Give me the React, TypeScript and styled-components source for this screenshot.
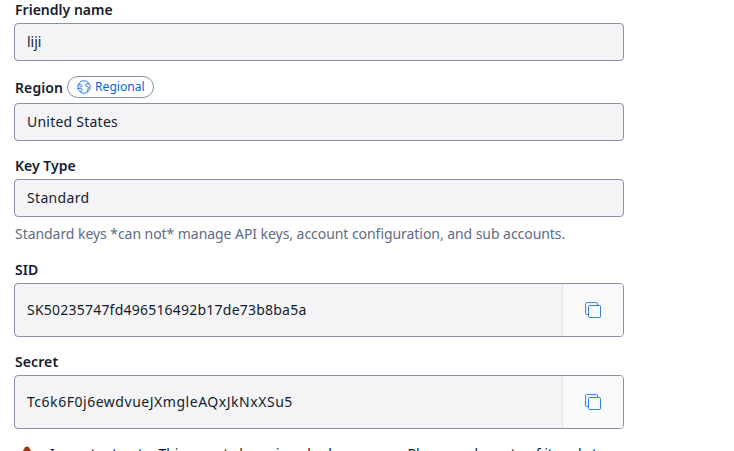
import React from 'react';
import styled, { createGlobalStyle } from 'styled-components';

const Global = createGlobalStyle`
  * { box-sizing: border-box; }
  html, body { margin: 0; background: #fff; overflow: hidden; }
  body { height: 451px; font-family: "Noto Sans", "Open Sans", sans-serif; color: #121c2d; font-size: 14px; }
`;

const Form = styled.main`
  width: 610px;
  height: 451px;
  margin-left: 14px;
  overflow: hidden;
`;

const Field = styled.section<{ $top: number }>`
  padding-top: ${p => p.$top}px;
`;

const LabelRow = styled.div<{ $height?: number }>`
  display: flex;
  align-items: flex-start;
  gap: 5px;
  height: ${p => p.$height ?? 23}px;
  padding-left: 1px;
`;

const Label = styled.label<{ $track?: number }>`
  font-weight: 600;
  line-height: 20px;
  letter-spacing: ${p => p.$track ?? 0}px;
  white-space: nowrap;
`;

const RegionLabel = styled(Label)`
  padding-top: 2px;
`;

const Badge = styled.span`
  display: flex;
  align-items: center;
  gap: 4px;
  width: 87px;
  height: 22px;
  margin-left: -1px;
  padding-left: 9px;
  border: 1px solid #8891aa;
  border-radius: 11px;
  color: #0263e0;
  font-size: 12px;
  line-height: 18px;
  letter-spacing: 0.04px;
  white-space: nowrap;
`;

const Box = styled.div<{ $height: number }>`
  display: flex;
  height: ${p => p.$height}px;
  overflow: hidden;
  border: 1px solid #8891aa;
  border-radius: 4px;
  background: #f4f4f6;
`;

const Value = styled.div<{ $track?: number }>`
  flex: 1;
  display: flex;
  align-items: center;
  padding: 0 0 2px 12px;
  letter-spacing: ${p => p.$track ?? 0}px;
  white-space: nowrap;
`;

const CopyButton = styled.button`
  display: flex;
  align-items: center;
  justify-content: center;
  width: 61px;
  padding: 0;
  border: 0;
  border-left: 1px solid #e1e3ea;
  background: #f9f9fa;
`;

const Help = styled.p`
  margin: 7px 0 0 1px;
  color: #606b85;
  line-height: 20px;
  letter-spacing: -0.055px;
  white-space: nowrap;
`;

const Notice = styled.div`
  display: flex;
  gap: 16px;
  margin: 15px 0 0 6px;
  line-height: 20px;
  white-space: nowrap;
`;

const KeyTerm = styled.span`
  padding: 0 11px 0 7px;
`;

const CopyIcon = () => (
  <svg width="16" height="16" viewBox="0 0 16 16" fill="none" stroke="#0263e0" strokeWidth="0.8">
    <path d="M3.5 12.5H1.6A1 1 0 0 1 .6 11.5V1.6A1 1 0 0 1 1.6.6h9.9a1 1 0 0 1 1 1v1.9" />
    <rect x="3.5" y="3.5" width="12" height="12" rx="1" />
  </svg>
);

const GlobeIcon = () => (
  <svg width="14" height="14" viewBox="0 0 14 14" fill="none" stroke="#0263e0" strokeWidth="0.85" strokeLinejoin="round">
    <circle cx="7" cy="7" r="6.2" />
    <path d="M1.1 4.7h2.7q1.3.2 1.1 1.2-.2.7-1.1.9-.8.3-1.3.1M.9 8.4h2.6q1.5.1 1.6 1.4 0 1-1.2 1.4l-.9.4M12.2 3.7H9.9q-1.3.3-1.3 1.4 0 1 1.2 1.3l1 .2q.9.3.6 1.4l-.6 1.3q-.4.9-.4 2.6" />
  </svg>
);

const WarningIcon = () => (
  <svg width="14" height="14" viewBox="0 0 14 14">
    <path d="M4.4 4.6Q4.6 2.6 7 2.6T9.6 4.6L13.6 11q.6 2-1.2 2H1.6Q-.2 13 .4 11Z" fill="#a82e16" />
  </svg>
);

export default function App() {
  return (
    <>
      <Global />
      <Form>
        <Field $top={0}>
          <LabelRow><Label $track={0.02}>Friendly name</Label></LabelRow>
          <Box $height={38}><Value>liji</Value></Box>
        </Field>
        <Field $top={15}>
          <LabelRow $height={27}><RegionLabel $track={0.1}>Region</RegionLabel><Badge><GlobeIcon />Regional</Badge></LabelRow>
          <Box $height={38}><Value $track={0.23}>United States</Value></Box>
        </Field>
        <Field $top={15}>
          <LabelRow><Label>Key Type</Label></LabelRow>
          <Box $height={38}><Value $track={0.33}>Standard</Value></Box>
          <Help>Standard keys *can not* manage API keys, account configuration, and sub accounts.</Help>
        </Field>
        <Field $top={16}>
          <LabelRow><Label>SID</Label></LabelRow>
          <Box $height={54}><Value $track={0.22}>SK50235747fd496516492b17de73b8ba5a</Value><CopyButton aria-label="Copy SID"><CopyIcon /></CopyButton></Box>
        </Field>
        <Field $top={15}>
          <LabelRow><Label $track={0.1}>Secret</Label></LabelRow>
          <Box $height={54}><Value $track={0.53}>Tc6k6F0j6ewdvueJXmgleAQxJkNxXSu5</Value><CopyButton aria-label="Copy secret"><CopyIcon /></CopyButton></Box>
        </Field>
        <Notice><WarningIcon /><span>Important note: This secret <KeyTerm>key</KeyTerm> is only shown once. Please make note of it and store</span></Notice>
      </Form>
    </>
  );
}
